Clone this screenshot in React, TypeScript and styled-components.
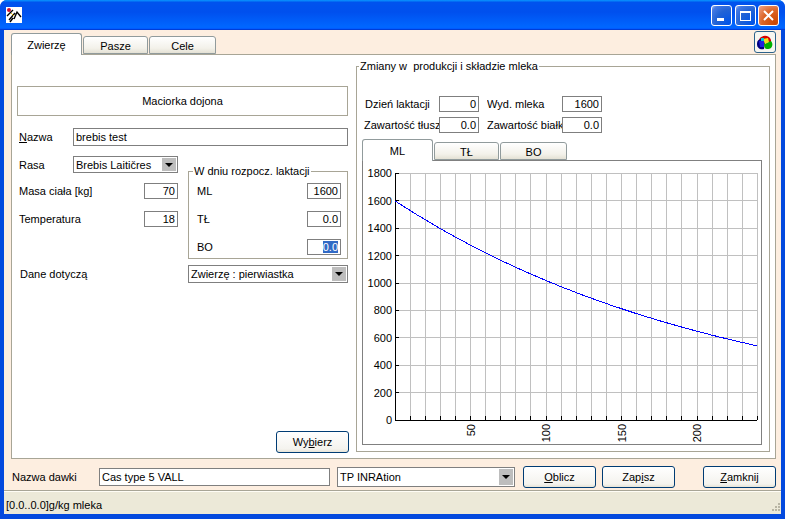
import React from "react";
import styled, { createGlobalStyle } from "styled-components";

const GlobalStyle = createGlobalStyle`
  html, body {
    margin: 0;
    padding: 0;
    background: white;
  }
  body {
    font-family: "Liberation Sans", Arial, sans-serif;
    font-size: 11px;
    color: black;
  }
`;

const Window = styled.div`
  position: relative;
  width: 785px;
  height: 519px;
  display: flex;
  flex-direction: column;
  overflow: hidden;
  border-radius: 7px 7px 0 0;
  background: #0349de;
`;

const TitleBar = styled.div`
  height: 30px;
  flex: none;
  display: flex;
  align-items: center;
  padding: 0 6px;
  background: linear-gradient(180deg, #0997ff, #0053ee 8%, #0050ee 40%, #06f 88%, #06f 93%, #005bff 95%, #003dd7 96%, #003dd7);
`;

const TitleButtons = styled.div`
  margin-left: auto;
  display: flex;
  gap: 2px;
  margin-right: 0;
`;

const TitleButton = styled.div<{ $close?: boolean }>`
  width: 21px;
  height: 21px;
  box-sizing: border-box;
  border: 1px solid white;
  border-radius: 3px;
  display: flex;
  align-items: center;
  justify-content: center;
  margin-left: ${(p) => (p.$close ? "0" : "1px")};
  background: ${(p) =>
    p.$close
      ? "radial-gradient(circle at 85% 90%, #cc4600 0%, #dc6527 55%, #f0a58a 100%)"
      : "radial-gradient(circle at 90% 90%, #0054e9 0%, #2263d5 55%, #4479e4 85%, #a3bbec 100%)"};
`;

const Body = styled.div`
  flex: none;
  height: 484px;
  margin: 0 4px;
  display: flex;
  flex-direction: column;
  background: #fdeee0;
`;

const TabStrip = styled.div`
  height: 24px;
  flex: none;
  box-sizing: border-box;
  padding: 3px 5px 0 7px;
  display: flex;
  align-items: flex-end;
`;

const Tab = styled.div<{ $active?: boolean; $width: number }>`
  width: ${(p) => p.$width}px;
  height: ${(p) => (p.$active ? 22 : 18)}px;
  margin-right: 1px;
  margin-bottom: ${(p) => (p.$active ? -1 : 0)}px;
  box-sizing: border-box;
  position: relative;
  z-index: ${(p) => (p.$active ? 1 : 0)};
  border: 1px solid #919b9c;
  border-bottom: ${(p) => (p.$active ? "none" : "1px solid #919b9c")};
  border-radius: 3px 3px 0 0;
  background: ${(p) => (p.$active ? "white" : "linear-gradient(180deg, #ffffff, #f3f1ea 70%, #e4e1d4)")};
  display: flex;
  align-items: center;
  justify-content: center;
  padding-top: 1px;
`;

const PaletteButton = styled.div`
  width: 22px;
  height: 22px;
  margin-left: auto;
  margin-bottom: 1px;
  box-sizing: border-box;
  border: 1px solid #2c628b;
  border-radius: 3px;
  background: #f7f6f0;
  display: flex;
  align-items: center;
  justify-content: center;
`;

const Page = styled.div`
  height: 405px;
  margin: 0 5px 0 7px;
  box-sizing: border-box;
  flex: none;
  border: 1px solid #a8a596;
  background: white;
  display: flex;
  padding-left: 5px;
`;

const LeftPane = styled.div`
  width: 332px;
  margin-right: 7px;
  display: flex;
  flex-direction: column;
  flex: none;
`;

const Header = styled.div`
  width: 331px;
  height: 30px;
  margin-top: 31px;
  box-sizing: border-box;
  border: 1px solid #a8a596;
  display: flex;
  align-items: center;
  justify-content: center;
`;

const Row = styled.div<{ $top: number }>`
  display: flex;
  align-items: center;
  margin-top: ${(p) => p.$top}px;
`;

const Label = styled.div<{ $width: number; $indent?: number }>`
  width: ${(p) => p.$width}px;
  flex: none;
  box-sizing: border-box;
  padding-left: ${(p) => p.$indent ?? 0}px;
  white-space: nowrap;
  overflow: hidden;
`;

const Field = styled.div<{ $width: number; $height?: number; $right?: boolean }>`
  width: ${(p) => p.$width}px;
  height: ${(p) => p.$height ?? 16}px;
  flex: none;
  box-sizing: border-box;
  border: 1px solid #7f7f7f;
  background: white;
  display: flex;
  align-items: center;
  justify-content: ${(p) => (p.$right ? "flex-end" : "flex-start")};
  padding: 0 2px;
  white-space: nowrap;
  overflow: hidden;
`;

const Selected = styled.span`
  background: #316ac5;
  color: white;
`;

const Select = styled(Field)<{ $gap?: number }>`
  padding: 0 1px 0 2px;
  justify-content: space-between;
  margin-left: ${(p) => p.$gap ?? 0}px;
`;

const Arrow = styled.div`
  width: 14px;
  height: calc(100% - 2px);
  flex: none;
  background: #bdbdbd;
  display: flex;
  align-items: center;
  justify-content: center;

  &::after {
    content: "";
    border-left: 4px solid transparent;
    border-right: 4px solid transparent;
    border-top: 4px solid black;
  }
`;

const Split = styled.div`
  display: flex;
  margin-top: 10px;
`;

const SplitLeft = styled.div`
  width: 161px;
  flex: none;
  margin-right: 10px;
`;

const Group = styled.fieldset`
  margin: 0;
  min-width: 0;
  box-sizing: border-box;
  border: 1px solid #a8a596;
`;

const Legend = styled.legend<{ $shift: number }>`
  padding: 0 1px;
  margin-left: ${(p) => p.$shift}px;
  line-height: 13px;
  white-space: nowrap;
`;

const LactationGroup = styled(Group)`
  width: 160px;
  height: 94px;
  margin-top: 9px;
  padding: 5px 6px 0 8px;
  display: flex;
  flex-direction: column;
  gap: 12px;
`;

const LactationRow = styled.div`
  display: flex;
  align-items: center;
  justify-content: space-between;
`;

const XpButton = styled.div<{ $gap?: number }>`
  width: 73px;
  height: 22px;
  box-sizing: border-box;
  flex: none;
  margin-left: ${(p) => p.$gap ?? 0}px;
  border: 1px solid #003c74;
  border-radius: 3px;
  background: linear-gradient(180deg, #ffffff, #f4f3ee 85%, #e6e3d6);
  display: flex;
  align-items: center;
  justify-content: center;
`;

const PickButton = styled(XpButton)`
  margin-top: auto;
  margin-bottom: 5px;
  align-self: flex-end;
`;

const ChangesGroup = styled(Group)`
  width: 414px;
  height: 392px;
  margin-top: 5px;
  padding: 0 0 0 5px;
`;

const Stats = styled.div`
  display: grid;
  grid-template-columns: 77px 40px 83px 40px;
  grid-auto-rows: 16px;
  row-gap: 5px;
  margin-top: 23px;
  align-items: center;
`;

const StatLabel = styled.div<{ $second?: boolean; $indent?: number }>`
  white-space: nowrap;
  overflow: hidden;
  padding-left: ${(p) => p.$indent ?? 0}px;
  margin-left: ${(p) => (p.$second ? 8 : 0)}px;
`;

const InnerTabs = styled.div`
  display: flex;
  align-items: flex-end;
  height: 21px;
  margin-top: 6px;
`;

const ChartBox = styled.div`
  width: 400px;
  height: 285px;
  box-sizing: border-box;
  border: 1px solid #808080;
  background: white;
`;

const Footer = styled.div`
  height: 32px;
  flex: none;
  box-sizing: border-box;
  padding: 5px 5px 0 8px;
  display: flex;
  align-items: center;
  align-self: stretch;
  border-bottom: 1px solid #a8a596;
`;

const StatusBar = styled.div`
  height: 23px;
  flex: none;
  box-sizing: border-box;
  background: #ece9d8;
  border-top: 1px solid #fffdf5;
  padding: 4px 0 0 2px;
  display: flex;
  align-items: center;
`;

const Grip = styled.svg`
  position: absolute;
  right: 4px;
  bottom: 5px;
`;

const Key = styled.u`
  text-underline-offset: 1px;
`;

const MILK_Y = [0, 200, 400, 600, 800, 1000, 1200, 1400, 1600, 1800];
const DAYS = Array.from({ length: 25 }, (_, i) => i * 10);

const X0 = 32;
const Y0 = 259;
const dayX = (d: number) => X0 + d * 1.51;
const milkY = (m: number) => Y0 - (m / 200) * 27.4;

const curve = Array.from({ length: 241 }, (_, d) => {
  const milk = 1600 * Math.exp(-0.00452 * d);
  return `${dayX(d).toFixed(1)},${milkY(milk).toFixed(1)}`;
}).join(" ");

function MilkChart() {
  return (
    <svg width="398" height="283" viewBox="0 0 398 283" style={{ display: "block" }}>
      <g stroke="#c0c0c0" strokeWidth="1" shapeRendering="crispEdges">
        {DAYS.slice(1).map((d) => (
          <line key={d} x1={dayX(d)} x2={dayX(d)} y1={milkY(1800)} y2={Y0} />
        ))}
        {MILK_Y.slice(1).map((m) => (
          <line key={m} x1={X0} x2={dayX(240)} y1={milkY(m)} y2={milkY(m)} />
        ))}
      </g>
      <g stroke="black" strokeWidth="1" shapeRendering="crispEdges">
        <line x1={X0} x2={X0} y1={milkY(1800)} y2={Y0} />
        <line x1={X0} x2={dayX(240)} y1={Y0} y2={Y0} />
        {MILK_Y.map((m) => (
          <line key={m} x1={X0} x2={X0 + 4} y1={milkY(m)} y2={milkY(m)} />
        ))}
        {DAYS.slice(1).map((d) => (
          <line key={d} x1={dayX(d)} x2={dayX(d)} y1={Y0 - 4} y2={Y0} />
        ))}
      </g>
      <polyline points={curve} fill="none" stroke="#0000ff" strokeWidth="1" shapeRendering="crispEdges" />
      <g fontFamily="'Liberation Sans', Arial, sans-serif" fontSize="11" fill="black">
        {MILK_Y.map((m) => (
          <text key={m} x={X0 - 3} y={milkY(m) + 4} textAnchor="end">
            {m}
          </text>
        ))}
        {[50, 100, 150, 200].map((d) => (
          <text
            key={d}
            textAnchor="end"
            transform={`translate(${dayX(d) + 4} ${Y0 + 4}) rotate(-90)`}
          >
            {d}
          </text>
        ))}
      </g>
    </svg>
  );
}

function AppIcon() {
  return (
    <svg width="16" height="16" viewBox="0 0 16 16">
      <rect width="16" height="16" fill="white" />
      <circle cx="3" cy="3" r="2" fill="#d01030" />
      <path d="M1 9 L7 3 M3 13 L9 6 M4 15 L7 11 M8 12 L11 5 L15 10" stroke="black" strokeWidth="1.4" fill="none" />
      <path d="M5 6 L8 9" stroke="#e8c020" strokeWidth="1" />
    </svg>
  );
}

function PaletteIcon() {
  return (
    <svg width="18" height="18" viewBox="0 0 18 18">
      <path d="M3 7 C4 2 13 1 15 7 L15 9 L3 10 Z" fill="#d80000" />
      <path d="M1 11 C1 7 3 6 7 6 L9 10 L8 16 C4 17 1 15 1 11 Z" fill="#000080" />
      <path d="M3 8 L8 7 L8 14 L4 14 Z" fill="#2020e0" />
      <path d="M8 11 L15 8 C18 11 16 17 11 16 C9 16 8 14 8 11 Z" fill="#00b000" />
      <path d="M7 6 L12 5 L13 9 L9 11 Z" fill="#f0e020" />
      <path d="M5 5 L8 5 L8 8 L5 8 Z" fill="#00c8d8" />
    </svg>
  );
}

export default function App() {
  return (
    <Window>
      <GlobalStyle />
      <TitleBar>
        <AppIcon />
        <TitleButtons>
          <TitleButton>
            <svg width="13" height="13" viewBox="0 0 13 13">
              <rect x="2" y="9" width="7" height="3" fill="white" />
            </svg>
          </TitleButton>
          <TitleButton>
            <svg width="13" height="13" viewBox="0 0 13 13">
              <rect x="1.5" y="2.5" width="10" height="9" fill="none" stroke="white" />
              <rect x="1" y="2" width="11" height="2" fill="white" />
            </svg>
          </TitleButton>
          <TitleButton $close>
            <svg width="13" height="13" viewBox="0 0 13 13">
              <path d="M2 2 L11 11 M11 2 L2 11" stroke="white" strokeWidth="2" />
            </svg>
          </TitleButton>
        </TitleButtons>
      </TitleBar>
      <Body>
        <TabStrip>
          <Tab $active $width={71}>Zwierzę</Tab>
          <Tab $width={65}>Pasze</Tab>
          <Tab $width={67}>Cele</Tab>
          <PaletteButton>
            <PaletteIcon />
          </PaletteButton>
        </TabStrip>
        <Page>
          <LeftPane>
            <Header>Maciorka dojona</Header>
            <Row $top={12}>
              <Label $width={56} $indent={2}>
                <Key>N</Key>azwa
              </Label>
              <Field $width={275} $height={18}>brebis test</Field>
            </Row>
            <Split>
              <SplitLeft>
                <Row $top={0}>
                  <Label $width={56} $indent={2}>Rasa</Label>
                  <Select $width={105} $height={17}>
                    Brebis Laitičres
                    <Arrow />
                  </Select>
                </Row>
                <Row $top={10}>
                  <Label $width={127} $indent={2}>Masa ciała [kg]</Label>
                  <Field $width={34} $right>70</Field>
                </Row>
                <Row $top={12}>
                  <Label $width={127} $indent={2}>Temperatura</Label>
                  <Field $width={34} $right>18</Field>
                </Row>
              </SplitLeft>
              <LactationGroup>
                <Legend $shift={-4}>W dniu rozpocz. laktacji</Legend>
                <LactationRow>
                  ML
                  <Field $width={34} $right>1600</Field>
                </LactationRow>
                <LactationRow>
                  TŁ
                  <Field $width={34} $right>0.0</Field>
                </LactationRow>
                <LactationRow>
                  BO
                  <Field $width={34} $right>
                    <Selected>0.0</Selected>
                  </Field>
                </LactationRow>
              </LactationGroup>
            </Split>
            <Row $top={6}>
              <Label $width={171} $indent={3}>Dane dotyczą</Label>
              <Select $width={160} $height={18}>
                Zwierzę : pierwiastka
                <Arrow />
              </Select>
            </Row>
            <PickButton>
              <span>
                Wy<Key>b</Key>ierz
              </span>
            </PickButton>
          </LeftPane>
          <ChangesGroup>
            <Legend $shift={-3}>Zmiany w&nbsp; produkcji i składzie mleka</Legend>
            <Stats>
              <StatLabel $indent={3}>Dzień laktacji</StatLabel>
              <Field $width={40} $right>0</Field>
              <StatLabel $second>Wyd. mleka</StatLabel>
              <Field $width={40} $right>1600</Field>
              <StatLabel $indent={2}>Zawartość tłusz</StatLabel>
              <Field $width={40} $right>0.0</Field>
              <StatLabel $second>Zawartość białk</StatLabel>
              <Field $width={40} $right>0.0</Field>
            </Stats>
            <InnerTabs>
              <Tab $active $width={71}>ML</Tab>
              <Tab $width={65}>TŁ</Tab>
              <Tab $width={67}>BO</Tab>
            </InnerTabs>
            <ChartBox>
              <MilkChart />
            </ChartBox>
          </ChangesGroup>
        </Page>
        <Footer>
          <Label $width={87}>Nazwa dawki</Label>
          <Field $width={231} $height={18}>Cas type 5 VALL</Field>
          <Select $width={178} $height={20} $gap={7}>
            TP INRAtion
            <Arrow />
          </Select>
          <XpButton $gap={8}>
            <span>
              <Key>O</Key>blicz
            </span>
          </XpButton>
          <XpButton $gap={6}>
            <span>
              Zap<Key>i</Key>sz
            </span>
          </XpButton>
          <XpButton $gap={28}>
            <span>
              <Key>Z</Key>amknij
            </span>
          </XpButton>
        </Footer>
        <StatusBar>[0.0..0.0]g/kg mleka</StatusBar>
      </Body>
      <Grip width="12" height="12" viewBox="0 0 12 12" fill="#b8b5a4">
        <rect x="9" y="1" width="2" height="2" />
        <rect x="6" y="4" width="2" height="2" />
        <rect x="9" y="4" width="2" height="2" />
        <rect x="3" y="7" width="2" height="2" />
        <rect x="6" y="7" width="2" height="2" />
        <rect x="9" y="7" width="2" height="2" />
      </Grip>
    </Window>
  );
}
